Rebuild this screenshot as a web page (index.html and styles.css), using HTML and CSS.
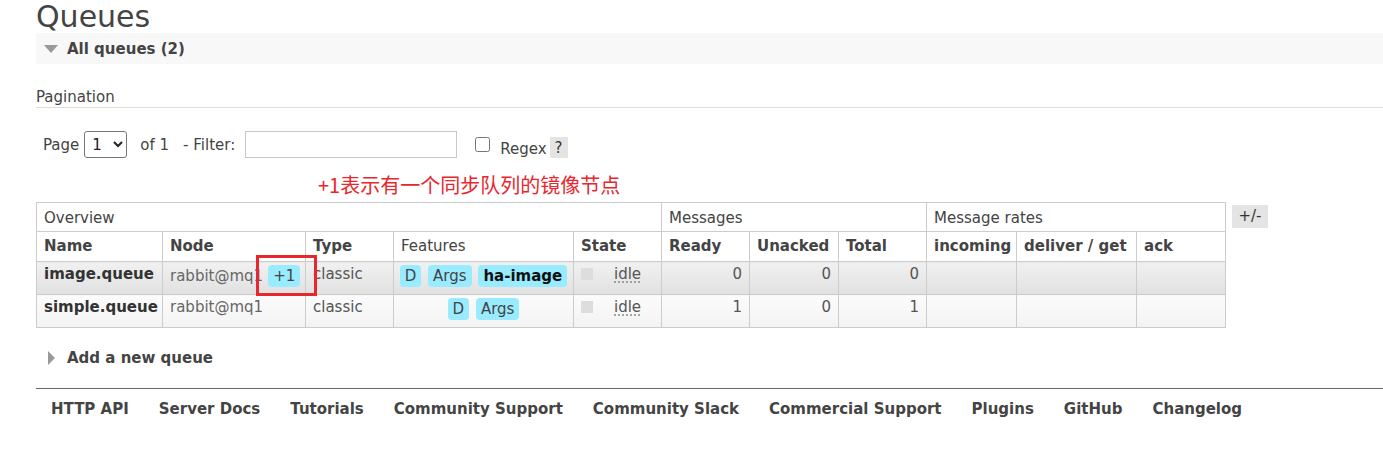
FILE: index.html
```html
<!DOCTYPE html>
<html lang="en">
<head>
<meta charset="utf-8">
<title>Queues</title>
<link rel="stylesheet" href="styles.css">
</head>
<body>
<div class="page">
  <h1 class="title">Queues</h1>
  <div class="section-bar">
    <svg class="tri-down" width="14" height="8" viewBox="0 0 14 8"><path d="M0 0H14L7 8Z" fill="#999"/></svg>
    <span class="section-label">All queues (2)</span>
  </div>

  <div class="pagination-head">Pagination</div>

  <div class="filter-row">
    <span class="lbl">Page</span>
    <select class="page-select"><option>1</option></select>
    <span class="lbl of">of 1</span>
    <span class="lbl filter-lbl">- Filter:</span>
    <input class="filter-input" type="text">
    <input class="regex-check" type="checkbox">
    <span class="regex-group"><span class="regex-lbl">Regex</span><span class="help">?</span></span>
  </div>

  <div class="annotation">+1表示有一个同步队列的镜像节点</div>

  <div class="table-row">
    <table class="list">
      <colgroup>
        <col class="c-name"><col class="c-node"><col class="c-type"><col class="c-feat"><col class="c-state">
        <col class="c-num"><col class="c-num2"><col class="c-num"><col class="c-inc"><col class="c-del"><col class="c-ack">
      </colgroup>
      <thead>
        <tr class="group-row">
          <th colspan="5">Overview</th>
          <th colspan="3">Messages</th>
          <th colspan="3">Message rates</th>
        </tr>
        <tr class="head-row">
          <th>Name</th><th>Node</th><th>Type</th><th class="normal">Features</th><th>State</th>
          <th>Ready</th><th>Unacked</th><th>Total</th><th>incoming</th><th>deliver / get</th><th>ack</th>
        </tr>
      </thead>
      <tbody>
        <tr class="alt1">
          <td class="name">image.queue</td>
          <td class="node">rabbit@mq1<span class="tag node-tag">+1</span></td>
          <td class="type">classic</td>
          <td class="features"><span class="tag">D</span> <span class="tag">Args</span> <span class="tag strong">ha-image</span></td>
          <td class="state"><span class="state-box"></span><abbr class="idle" title="idle">idle</abbr></td>
          <td class="num">0</td><td class="num">0</td><td class="num">0</td>
          <td></td><td></td><td></td>
        </tr>
        <tr class="alt2">
          <td class="name">simple.queue</td>
          <td class="node">rabbit@mq1</td>
          <td class="type">classic</td>
          <td class="features"><span class="tag">D</span> <span class="tag">Args</span></td>
          <td class="state"><span class="state-box"></span><abbr class="idle" title="idle">idle</abbr></td>
          <td class="num">1</td><td class="num">0</td><td class="num">1</td>
          <td></td><td></td><td></td>
        </tr>
      </tbody>
    </table>
    <span class="toggle-cols">+/-</span>
  </div>

  <div class="add-bar">
    <svg class="tri-right" width="7" height="14" viewBox="0 0 7 14"><path d="M0 0L7 7L0 14Z" fill="#999"/></svg>
    <span class="section-label">Add a new queue</span>
  </div>

  <div class="footer">
    <a class="foot-link">HTTP API</a>
    <a class="foot-link">Server Docs</a>
    <a class="foot-link">Tutorials</a>
    <a class="foot-link">Community Support</a>
    <a class="foot-link">Community Slack</a>
    <a class="foot-link">Commercial Support</a>
    <a class="foot-link">Plugins</a>
    <a class="foot-link">GitHub</a>
    <a class="foot-link">Changelog</a>
  </div>

  <div class="mark-box"></div>
</div>
</body>
</html>
```

FILE: styles.css
```css
html, body {
  margin: 0;
  padding: 0;
  background: #fff;
}
body {
  font-family: "DejaVu Sans", Verdana, sans-serif;
  font-size: 15px;
  line-height: 18px;
  color: #444;
}
.page {
  position: relative;
  padding: 1px 0 0 36px;
}
.title {
  margin: 0;
  font-size: 30px;
  line-height: 32px;
  font-weight: normal;
  color: #444;
}
.section-bar {
  display: flex;
  align-items: center;
  height: 31px;
  background: #f8f8f8;
  padding-left: 8px;
}
.tri-down {
  margin-right: 9px;
  margin-top: 1px;
}
.section-label {
  font-weight: bold;
  color: #444;
}
.pagination-head {
  margin-top: 24px;
  padding-bottom: 1px;
  border-bottom: 1px solid #ddd;
}
.filter-row {
  display: flex;
  align-items: center;
  height: 27px;
  margin-top: 23px;
  padding-left: 7px;
}
.page-select {
  box-sizing: border-box;
  width: 43px;
  height: 27px;
  margin-left: 5px;
  font-family: inherit;
  font-size: 15px;
  color: #222;
  background: #fff;
  border: 1px solid #767676;
  border-radius: 3px;
  padding: 0 0 0 3px;
}
.of {
  margin-left: 13px;
}
.filter-lbl {
  margin-left: 14px;
}
.filter-input {
  box-sizing: border-box;
  width: 212px;
  height: 27px;
  margin: 0 0 0 10px;
  border: 1px solid #c8c8c8;
  padding: 0 4px;
  font-family: inherit;
  font-size: 15px;
}
.regex-check {
  width: 15px;
  height: 15px;
  margin: 0 0 0 18px;
}
.regex-group {
  align-self: flex-end;
  margin-left: 10px;
  display: flex;
  align-items: flex-end;
}
.help {
  margin-left: 3px;
  background: #e4e4e4;
  padding: 2px 5px 1px;
  color: #333;
}
.annotation {
  margin-top: 15px;
  padding-left: 282px;
  font-family: "Noto Sans CJK SC", sans-serif;
  font-size: 20px;
  line-height: 24px;
  color: #e8262d;
}
.table-row {
  display: flex;
  align-items: flex-start;
  margin-top: 5px;
}
.list {
  border-collapse: collapse;
  table-layout: fixed;
  width: 1190px;
}
.c-name { width: 126px; }
.c-node { width: 143px; }
.c-type { width: 88px; }
.c-feat { width: 180px; }
.c-state { width: 88px; }
.c-num { width: 88px; }
.c-num2 { width: 89px; }
.c-inc { width: 90px; }
.c-del { width: 120px; }
.c-ack { width: 89px; }
.list th, .list td {
  border: 1px solid #ccc;
  text-align: left;
  white-space: nowrap;
  overflow: visible;
}
.group-row th {
  font-weight: normal;
  padding: 6px 7px 4px;
}
.head-row th {
  font-weight: bold;
  padding: 5px 7px 6px;
}
.head-row th.normal {
  font-weight: normal;
}
.list td {
  padding: 3px 7px 7px;
  vertical-align: top;
}
.alt1 td {
  background: linear-gradient(#f1f1f1, #e1e1e1);
}
.alt2 td {
  background: linear-gradient(#fbfbfb, #f3f3f3);
}
.name {
  font-weight: bold;
  color: #333;
}
.node {
  color: #666;
}
.type {
  color: #555;
}
.list td.features {
  text-align: center;
  padding-left: 4px;
  padding-right: 4px;
}
.tag {
  display: inline-block;
  background: #99ebff;
  border-radius: 4px;
  padding: 2px 5px;
  margin: 0 1px;
  color: #444;
}
.tag.node-tag {
  margin-left: 5px;
}
.tag.strong {
  font-weight: bold;
  color: #111;
}
.state-box {
  display: inline-block;
  width: 12px;
  height: 12px;
  background: #ddd;
  vertical-align: -1px;
  margin-right: 21px;
}
.idle {
  text-decoration: underline dotted #888;
  text-underline-offset: 3px;
  color: #555;
}
.list td.num {
  text-align: right;
  color: #555;
}
.toggle-cols {
  margin: 3px 0 0 6px;
  background: #e4e4e4;
  width: 36px;
  height: 23px;
  line-height: 23px;
  text-align: center;
  color: #333;
}
.add-bar {
  display: flex;
  align-items: center;
  height: 31px;
  margin-top: 14px;
  padding-left: 12px;
}
.tri-right {
  margin-right: 12px;
}
.footer {
  margin-top: 15px;
  border-top: 1px solid #666;
  padding-top: 11px;
  display: flex;
}
.foot-link {
  padding: 0 15px;
  font-weight: bold;
  color: #444;
  text-decoration: none;
}
.mark-box {
  position: absolute;
  left: 256px;
  top: 255px;
  width: 55px;
  height: 35px;
  border: 3px solid #e8262d;
}
```
